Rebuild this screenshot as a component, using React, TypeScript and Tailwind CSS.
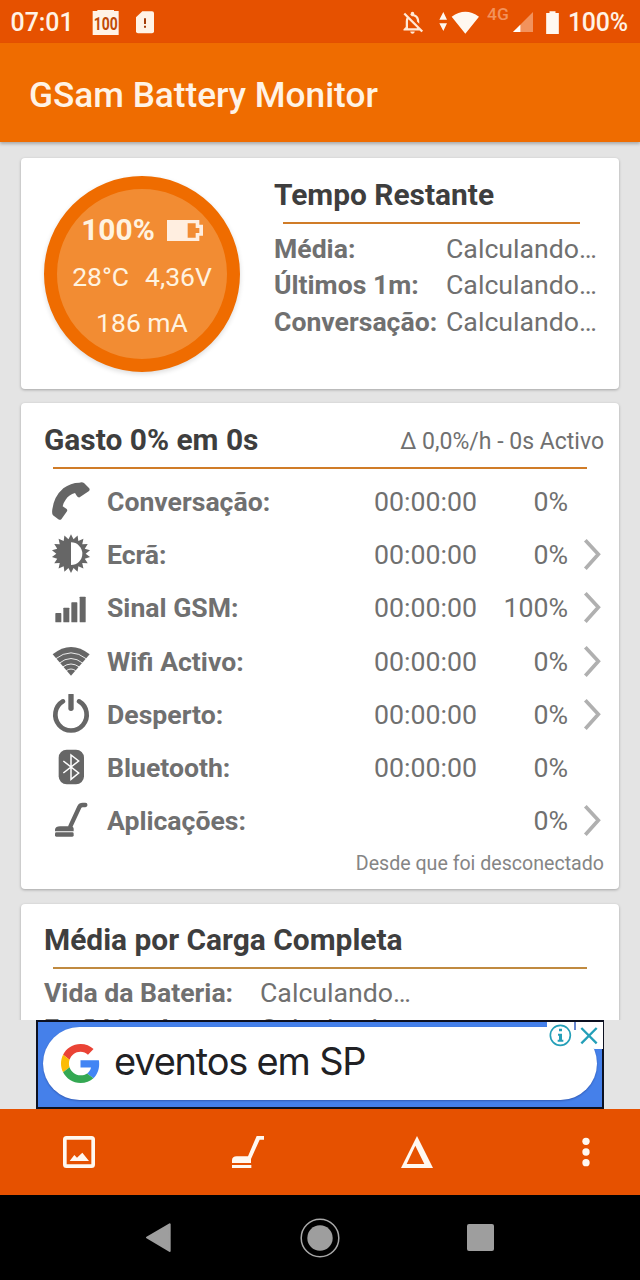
import type { ReactNode } from "react";
import { MdOutlineNotificationsOff } from "react-icons/md";

const GEAR_POINTS = Array.from({ length: 36 }, (_, i) => {
  const r = i % 2 === 0 ? 58 : 44;
  const a = (i * Math.PI) / 18 - Math.PI / 2;
  return `${(153 + r * Math.cos(a)).toFixed(1)},${(462 + r * Math.sin(a)).toFixed(1)}`;
}).join(" ");

function RowIcon({ viewBox, children }: { viewBox: string; children: ReactNode }) {
  return (
    <svg viewBox={viewBox} className="h-[42px] w-[42px] shrink-0" fill="#666666">
      {children}
    </svg>
  );
}

const PhoneIcon = (
  <RowIcon viewBox="90 243 126 126">
    <path d="M178 248Q186 245 192 249L207 264Q211 269 207 273L179 292Q174 293 171 289L165 279Q147 284 137 299Q130 308 128 319L140 327Q143 330 141 334L124 358Q120 361 115 358L99 346Q95 341 97 328Q102 289 130 265Q152 248 178 248Z" />
  </RowIcon>
);

const ScreenIcon = (
  <RowIcon viewBox="90 403 126 126">
    <polygon points={GEAR_POINTS} />
    <path d="M153 428A34 34 0 0 1 153 496Z" fill="#fff" />
  </RowIcon>
);

const SignalIcon = (
  <RowIcon viewBox="90 563 126 126">
    <rect x="106" y="641" width="18" height="28" rx="2" />
    <rect x="130" y="625" width="18" height="44" rx="2" />
    <rect x="154" y="609" width="18" height="60" rx="2" />
    <rect x="179" y="592" width="18" height="77" rx="2" />
  </RowIcon>
);

const WifiIcon = (
  <RowIcon viewBox="90 33 126 126">
    <path d="M98 73Q153 29 209 73L153 137Z" />
    <g fill="none" stroke="#fff" strokeWidth="2.6">
      <path d="M106 87Q153 50 200 87" />
      <path d="M117 100Q153 71 189 100" />
      <path d="M128 111Q153 93 178 111" />
      <path d="M139 122Q153 112 167 122" />
    </g>
  </RowIcon>
);

const PowerIcon = (
  <RowIcon viewBox="90 193 126 126">
    <g fill="none" stroke="#666666" strokeLinecap="round">
      <path d="M153 196V236" strokeWidth="16" />
      <path d="M129 215A47 47 0 1 0 177 215" strokeWidth="14" />
    </g>
  </RowIcon>
);

const BluetoothIcon = (
  <RowIcon viewBox="90 353 126 126">
    <rect x="116" y="361" width="76" height="104" rx="24" />
    <path
      d="M130 395L176 431L153 450V377L176 395L130 431"
      fill="none"
      stroke="#fff"
      strokeWidth="4.5"
    />
  </RowIcon>
);

const SweeperIcon = (
  <RowIcon viewBox="90 513 126 126">
    <path
      d="M196 528H188Q181 528 178 534L151 592"
      fill="none"
      stroke="#666666"
      strokeWidth="13"
      strokeLinecap="round"
    />
    <path d="M105 607V601Q107 592 120 592H152Q161 593 161 600V607Z" />
    <rect x="105" y="610" width="56" height="13" rx="4" />
  </RowIcon>
);

type Usage = { label: string; time: string; pct: string; icon: ReactNode; more: boolean };

const USAGE: Usage[] = [
  { label: "Conversação:", time: "00:00:00", pct: "0%", icon: PhoneIcon, more: false },
  { label: "Ecrã:", time: "00:00:00", pct: "0%", icon: ScreenIcon, more: true },
  { label: "Sinal GSM:", time: "00:00:00", pct: "100%", icon: SignalIcon, more: true },
  { label: "Wifi Activo:", time: "00:00:00", pct: "0%", icon: WifiIcon, more: true },
  { label: "Desperto:", time: "00:00:00", pct: "0%", icon: PowerIcon, more: true },
  { label: "Bluetooth:", time: "00:00:00", pct: "0%", icon: BluetoothIcon, more: false },
  { label: "Aplicações:", time: "", pct: "0%", icon: SweeperIcon, more: true },
];

function UsageRow({ row }: { row: Usage }) {
  return (
    <div className="flex h-[53.3px] items-center pl-[29px]">
      {row.icon}
      <span className="w-[282px] pl-[15px] text-[26.6px] font-bold">{row.label}</span>
      <span className="w-[107px]">{row.time}</span>
      <span className="w-[87px] text-right">{row.pct}</span>
      <span className="w-[14px]" />
      {row.more && (
        <svg viewBox="726 403 60 126" className="h-[42px] w-[20px] shrink-0" fill="none">
          <path d="M736 422L775 464L736 507" stroke="#b0b0b0" strokeWidth="11" />
        </svg>
      )}
    </div>
  );
}

function StatusBar() {
  return (
    <header className="flex h-[43px] items-center bg-[#e65100] pt-[2px] pl-[10.5px] text-[24.9px] leading-[41px] font-medium text-[#fff3e6]">
      <span className="w-[81.5px]">07:01</span>
      <svg viewBox="276 24 84 84" className="h-[28px] w-[28px]">
        <path d="M292 27H342V30H356V102H278V30H292Z" fill="#fff3e6" />
        <text
          x="317"
          y="86"
          textAnchor="middle"
          textLength="72"
          lengthAdjust="spacingAndGlyphs"
          fontFamily="Roboto"
          fontWeight="700"
          fontSize="55"
          fill="#bf4a08"
        >
          100
        </text>
      </svg>
      <svg viewBox="408 24 54 84" className="ml-[16px] h-[28px] w-[18px]">
        <path
          d="M427 31H456Q462 31 462 37V91Q462 97 456 97H414Q408 97 408 91V49Z"
          fill="#fff3e6"
        />
        <path d="M432 52H438V69H432ZM432 74H438V80H432Z" fill="#a33c08" />
      </svg>
      <MdOutlineNotificationsOff className="ml-[245px] h-[27px] w-[27px] text-[#ffe9d6]" />
      <svg viewBox="174 24 126 78" className="ml-[12px] h-[26px] w-[42px]" fill="#fff8f0">
        <path d="M190 30L201 53H178ZM178 64H201L190 87ZM215 44Q256 14 297 44L256 95Z" />
      </svg>
      <span className="ml-[7px] self-start pt-[2px] text-[17.4px] leading-[20px] text-[#f2925c]">
        4G
      </span>
      <svg viewBox="398 24 62 78" className="ml-[4px] h-[26px] w-[20.7px]">
        <path d="M458 30V90H398Z" fill="#f2925c" />
        <path d="M420 68V90H398Z" fill="#fff" />
      </svg>
      <svg viewBox="500 24 38 78" className="ml-[13px] h-[26px] w-[13px]">
        <path d="M510 28H528V33H538V96H500V33H510Z" fill="#fff8f0" />
      </svg>
      <span className="ml-[8.5px] tracking-[-0.2px]">100%</span>
    </header>
  );
}

function BatteryDial() {
  return (
    <div className="mt-[18px] ml-[23px] flex h-[196px] w-[196px] shrink-0 flex-col items-center rounded-full border-[13px] border-[#ef6c00] bg-[#f28c33] pt-[18px] text-[26.5px] text-[#fff3e0] shadow-[0_2px_5px_rgba(0,0,0,0.14)]">
      <div className="flex h-[47px] items-center text-[29.9px] font-bold">
        <span>100%</span>
        <svg viewBox="438 207 108 63" className="ml-[12px] h-[21px] w-[36px]">
          <path
            fillRule="evenodd"
            d="M438 207H535V221H546V254H535V270H438ZM500 217V260H524V246H535V231H524V217Z"
            fill="#ffeee0"
          />
        </svg>
      </div>
      <div className="flex h-[46px] items-center gap-[16px]">
        <span>28°C</span>
        <span>4,36V</span>
      </div>
      <div className="flex h-[46px] items-center">186 mA</div>
    </div>
  );
}

const REMAINING = ["Média:", "Últimos 1m:", "Conversação:"];

function RemainingCard() {
  return (
    <section className="flex h-[231px] rounded-[4px] bg-white shadow-[0_1px_3px_rgba(0,0,0,0.28)]">
      <BatteryDial />
      <div className="ml-[34px] pt-[17px]">
        <h2 className="h-[40px] text-[29.9px] leading-[40px] font-bold text-[#3e3e3e]">
          Tempo Restante
        </h2>
        <div className="mt-[7px] mb-[7px] ml-[9px] h-[2px] w-[297px] bg-[#d07c28]" />
        {REMAINING.map((label) => (
          <div key={label} className="flex h-[36.5px] items-center">
            <span className="w-[172px] text-[26.6px] font-bold">{label}</span>
            <span>Calculando…</span>
          </div>
        ))}
      </div>
    </section>
  );
}

function UsageCard() {
  return (
    <section className="h-[486px] rounded-[4px] bg-white pt-[16px] shadow-[0_1px_3px_rgba(0,0,0,0.28)]">
      <div className="flex h-[40px] items-center justify-between pr-[15px] pl-[23px]">
        <h2 className="pt-[2px] text-[29.9px] font-bold text-[#3e3e3e]">Gasto 0% em 0s</h2>
        <span className="pt-[7px] text-[23px]">Δ 0,0%/h - 0s Activo</span>
      </div>
      <div className="mt-[8px] mb-[6px] ml-[32px] h-[2px] w-[534px] bg-[#d07c28]" />
      {USAGE.map((row) => (
        <UsageRow key={row.label} row={row} />
      ))}
      <p className="pt-[2px] pr-[15px] text-right text-[19.6px] leading-[28px] text-[#858585]">
        Desde que foi desconectado
      </p>
    </section>
  );
}

function AverageCard() {
  return (
    <section className="h-[200px] rounded-[4px] bg-white pt-[16px] pl-[23px] shadow-[0_1px_3px_rgba(0,0,0,0.28)]">
      <h2 className="h-[40px] text-[29.9px] leading-[40px] font-bold text-[#3e3e3e]">
        Média por Carga Completa
      </h2>
      <div className="mt-[7px] mb-[6.5px] ml-[9px] h-[2px] w-[534px] bg-[#c08a40]" />
      {["Vida da Bateria:", "Ecrã Ligado:"].map((label) => (
        <div key={label} className="flex h-[36px] items-center">
          <span className="w-[216px] text-[26.6px] font-bold">{label}</span>
          <span>Calculando…</span>
        </div>
      ))}
    </section>
  );
}

function AdBanner() {
  return (
    <div className="relative mx-[36px] flex h-[89px] items-start border-2 border-[#0c1020] bg-[#4580ea] px-[5px] pt-[5px]">
      <div className="flex h-[73px] w-full items-center rounded-full bg-white pl-[18px] shadow-[0_1px_2px_rgba(0,0,60,0.3)]">
        <svg viewBox="0 0 48 48" className="h-[39px] w-[39px]">
          <path
            fill="#ea4335"
            d="M24 9.5c3.54 0 6.71 1.22 9.21 3.6l6.85-6.85C35.9 2.38 30.47 0 24 0 14.62 0 6.51 5.38 2.56 13.22l7.98 6.19C12.43 13.72 17.74 9.5 24 9.5z"
          />
          <path
            fill="#4285f4"
            d="M46.98 24.55c0-1.57-.15-3.09-.38-4.55H24v9.02h12.94c-.58 2.96-2.26 5.48-4.78 7.18l7.73 6c4.51-4.18 7.09-10.36 7.09-17.65z"
          />
          <path
            fill="#fbbc05"
            d="M10.53 28.59c-.48-1.45-.76-2.99-.76-4.59s.27-3.14.76-4.59l-7.98-6.19C.92 16.46 0 20.12 0 24c0 3.88.92 7.54 2.56 10.78l7.97-6.19z"
          />
          <path
            fill="#34a853"
            d="M24 48c6.48 0 11.93-2.13 15.89-5.81l-7.73-6c-2.15 1.45-4.92 2.3-8.16 2.3-6.26 0-11.57-4.22-13.47-9.91l-7.98 6.19C6.51 42.62 14.62 48 24 48z"
          />
        </svg>
        <span className="ml-[14px] pb-[5px] font-['Inter',sans-serif] text-[38px] leading-[48px] tracking-[-1.2px] text-[#212124]">
          eventos em SP
        </span>
      </div>
      <svg viewBox="442 66 168 81" className="absolute top-0 right-[-1px] h-[27px] w-[56px]">
        <path d="M442 66H610V147H585L560 140L442 100Z" fill="#fff" />
        <path d="M526 66V90" stroke="#4a6fc8" strokeWidth="5" />
        <circle cx="482" cy="106" r="30" fill="none" stroke="#249fb8" strokeWidth="5" />
        <path
          d="M478 86H487V94H478ZM475 101H487V119H491V125H474V119H478V107H475Z"
          fill="#249fb8"
        />
        <path d="M545 84L591 130M591 84L545 130" stroke="#249fb8" strokeWidth="7" />
      </svg>
    </div>
  );
}

function Toolbar() {
  return (
    <nav className="flex h-[86px] items-center bg-[#e65100] text-[#fff8f0]">
      <div className="flex w-[158px] justify-center">
        <svg viewBox="0 0 96 96" className="h-[32px] w-[32px]">
          <rect x="5.5" y="5.5" width="85" height="85" rx="5" fill="none" stroke="currentColor" strokeWidth="11" />
          <path d="M20 75L34 57L42 65L58 50L78 75Z" fill="currentColor" />
        </svg>
      </div>
      <div className="flex w-[180px] justify-center">
        <svg viewBox="696 108 96 96" className="h-[32px] w-[32px]" fill="currentColor">
          <path d="M770 108H792V119H779L753 177V189H696V180Q697 169 710 169H744ZM696 195H754V204H696Z" />
        </svg>
      </div>
      <div className="flex w-[158px] justify-center">
        <svg viewBox="243 108 96 96" className="h-[32px] w-[32px]" fill="currentColor">
          <path fillRule="evenodd" d="M291 108L339 204H243ZM286 137L260 192H313Z" />
        </svg>
      </div>
      <div className="flex w-[144px] justify-center pl-[35px]">
        <svg viewBox="0 0 24 96" className="h-[32px] w-[8px]" fill="currentColor">
          <circle cx="12" cy="16" r="11" />
          <circle cx="12" cy="48" r="11" />
          <circle cx="12" cy="80" r="11" />
        </svg>
      </div>
    </nav>
  );
}

function NavigationBar() {
  return (
    <footer className="flex h-[85px] items-center justify-center bg-black">
      <div className="flex w-[161px] justify-center">
        <svg viewBox="438 368 76 88" className="mr-[1px] h-[29px] w-[25px]">
          <path
            d="M441 412L510 372V453Z"
            fill="#9e9e9e"
            stroke="#9e9e9e"
            strokeWidth="6"
            strokeLinejoin="round"
          />
        </svg>
      </div>
      <div className="flex w-[161px] justify-center">
        <svg viewBox="-20 -20 40 40" className="h-[40px] w-[40px]">
          <circle r="18.8" fill="none" stroke="#a8a8a8" strokeWidth="1.5" />
          <circle r="12.7" fill="#9e9e9e" />
        </svg>
      </div>
      <div className="flex w-[161px] justify-center">
        <div className="mr-[2px] h-[27px] w-[27px] rounded-[2px] bg-[#9e9e9e]" />
      </div>
    </footer>
  );
}

export default function App() {
  return (
    <div className="flex h-[1280px] w-[640px] flex-col overflow-hidden bg-[#e4e4e4] font-['Roboto',sans-serif] text-[26.7px] text-[#707070]">
      <StatusBar />
      <div className="flex h-[99px] shrink-0 items-center bg-[#ef6c00] pt-[5px] pl-[29px] text-[35.2px] font-medium text-[#fff3e6] shadow-[0_2px_3px_rgba(0,0,0,0.25)]">
        <h1>GSam Battery Monitor</h1>
      </div>
      <main className="flex h-[878px] shrink-0 flex-col gap-[14.5px] overflow-hidden px-[21px] pt-[15.5px] *:shrink-0">
        <RemainingCard />
        <UsageCard />
        <AverageCard />
      </main>
      <AdBanner />
      <Toolbar />
      <NavigationBar />
    </div>
  );
}
